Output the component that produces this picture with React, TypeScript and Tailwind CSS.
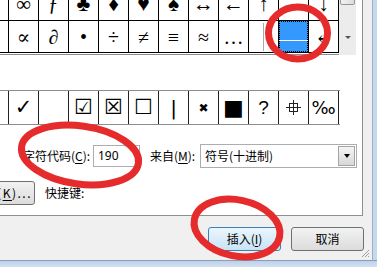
import type { ReactNode } from 'react';

const sym = "font-['Liberation_Serif','DejaVu_Serif',serif]";
const sans = "font-['DejaVu_Sans','Noto_Sans',sans-serif]";

const row1 = ['⁄', '∞', 'ƒ', '♣', '♦', '♥', '♠', '↔', '←', '↑', '→', '↓'];
const row2 = ['×', '∝', '∂', '•', '÷', '≠', '≡', '≈', '…', '⏐', '⎯', '↵'];

function Cell({ children }: { children?: ReactNode }) {
  return (
    <div className="flex h-[32px] w-[30px] shrink-0 items-center justify-center border-r border-b border-black">
      {children}
    </div>
  );
}

function SymbolGrid() {
  return (
    <div className="-mt-[11px] -ml-[21px] flex">
      <div className="flex flex-col">
        <div className={`flex text-[21px] leading-none ${sym}`}>
          {row1.map((s, i) => (
            <Cell key={i}>{s}</Cell>
          ))}
        </div>
        <div className={`flex text-[20px] leading-none ${sym}`}>
          {row2.map((s, i) => {
            if (i === 9) {
              return (
                <Cell key={i}>
                  <div className="h-[28px] w-px bg-[#a8a8a8]" />
                </Cell>
              );
            }
            if (i === 10) {
              return (
                <Cell key={i}>
                  <div className="flex h-full w-full flex-col justify-end bg-[#3399ff] pb-[11px] outline-1 -outline-offset-1 outline-dotted outline-black">
                    <div className="h-px bg-white" />
                  </div>
                </Cell>
              );
            }
            return <Cell key={i}>{s}</Cell>;
          })}
        </div>
        <div className="mt-px h-px bg-[#8c8c8c]" />
      </div>
      {/* scrollbar */}
      <div className="flex h-[66px] w-[17px] flex-col justify-between bg-[#ececec]">
        <div className="mx-px h-[16px] rounded-[2px] border border-[#979797] bg-gradient-to-r from-[#f3f3f3] to-[#dcdcdc]" />
        <div className="flex h-[20px] items-start justify-center pt-[1px]">
          <div className="h-0 w-0 border-x-[3px] border-t-[3px] border-x-transparent border-t-[#555]" />
        </div>
      </div>
    </div>
  );
}

function CrossHair() {
  return (
    <svg width="15" height="15" viewBox="0 0 15 15">
      <rect x="3.5" y="3.5" width="8" height="8" fill="none" stroke="#222" strokeWidth="1" />
      <line x1="7.5" y1="0" x2="7.5" y2="15" stroke="#222" strokeWidth="1" />
      <line x1="0" y1="7.5" x2="15" y2="7.5" stroke="#222" strokeWidth="1" />
    </svg>
  );
}

function RecentRow() {
  const items: ReactNode[] = [
    '',
    <span className="text-[21px] font-bold">✓</span>,
    '',
    <span className="text-[21px] font-bold">☑</span>,
    <span className="text-[21px] font-bold">☒</span>,
    <span className="text-[21px] font-bold">☐</span>,
    <span className="text-[20px]">|</span>,
    <span className="text-[12px]">✖</span>,
    <span className="text-[22px]">■</span>,
    <span className={`text-[19px] font-['Liberation_Sans',sans-serif]`}>?</span>,
    <CrossHair />,
    <span className="text-[18px]">‰</span>,
  ];
  return (
    <div className={`-ml-[21px] mt-[35px] flex w-[361px] border-y border-[#8c8c8c] leading-none ${sans}`}>
      {items.map((it, i) => (
        <div
          key={i}
          className="flex h-[33px] w-[30px] shrink-0 items-center justify-center border-r border-[#222]"
        >
          {it}
        </div>
      ))}
    </div>
  );
}

export default function App() {
  return (
    <div className="relative h-[267px] w-[377px] overflow-hidden bg-[#c6d8ec] font-['Noto_Sans_CJK_SC','Noto_Sans',sans-serif] text-[12px] text-black">
      <div className="flex h-[260px]">
        <div className="relative flex w-[372px] flex-col bg-[#f0f0f0]">
          {/* tab page */}
          <div className="h-[216px] w-[363px] shrink-0 overflow-hidden border-r border-b border-[#8e8f8f] bg-white">
            <SymbolGrid />
            <RecentRow />

            <div className="mt-[19px] flex h-[24px] items-center">
              <div className="w-[70px] shrink-0 pl-[23px] box-content whitespace-nowrap">
                字符代码(<span className="underline underline-offset-2">C</span>):
              </div>
              <div className="flex h-[22px] w-[47px] items-center border border-[#abadb3] pl-[4px] font-['Noto_Sans',sans-serif]">
                190
              </div>
              <div className="ml-[10px] w-[50px] shrink-0 whitespace-nowrap">
                来自(<span className="underline underline-offset-2">M</span>):
              </div>
              <div className="flex h-[24px] w-[157px] items-center justify-between border border-[#abadb3] pl-[4px]">
                <span>符号(十进制)</span>
                <div className="mr-px flex h-[20px] w-[17px] items-center justify-center border border-[#a4a4a4] bg-gradient-to-b from-[#f4f4f4] to-[#d8d8d8]">
                  <div className="h-0 w-0 border-x-[3.5px] border-t-[4px] border-x-transparent border-t-black" />
                </div>
              </div>
            </div>

            <div className="mt-[13px] flex h-[24px] items-center">
              <div className="-ml-[60px] flex h-[24px] w-[95px] shrink-0 items-center justify-end rounded-[3px] border border-[#707070] bg-gradient-to-b from-[#f2f2f2] to-[#dcdcdc] pr-[2px] whitespace-nowrap">
                快捷键
                <span className="tracking-[1.5px]">
                  (<span className="underline underline-offset-2">K</span>)...
                </span>
              </div>
              <div className="ml-[10px]">快捷键:</div>
            </div>
          </div>

          {/* buttons */}
          <div className="flex gap-[10px] pl-[208px] pt-[11px]">
            <div className="flex h-[24px] w-[73px] items-center justify-center rounded-[3px] border border-[#3c7fb1] bg-gradient-to-b from-[#eaf6fd] to-[#c9e3f5]">
              插入(<span className="underline underline-offset-2">I</span>)
            </div>
            <div className="flex h-[24px] w-[73px] items-center justify-center rounded-[3px] border border-[#707070] bg-gradient-to-b from-[#f2f2f2] to-[#dcdcdc]">
              取消
            </div>
          </div>

          {/* resize grip */}
          <svg className="absolute right-[2px] bottom-[2px]" width="10" height="10" viewBox="0 0 10 10">
            <line x1="9" y1="2" x2="2" y2="9" stroke="#a0a0a0" strokeWidth="1" />
            <line x1="9" y1="5" x2="5" y2="9" stroke="#a0a0a0" strokeWidth="1" />
            <line x1="9" y1="8" x2="8" y2="9" stroke="#a0a0a0" strokeWidth="1" />
          </svg>
        </div>
        <div className="flex-1 border-l border-[#9fb0c4]" />
      </div>
      <div className="h-[7px] border-t border-[#8d9db2] bg-gradient-to-b from-[#bcd1ea] to-[#d2e1f1]" />

      {/* red annotation marks */}
      <svg className="pointer-events-none absolute inset-0" width="377" height="267">
        <ellipse cx="298" cy="33" rx="29.5" ry="26" fill="none" stroke="#e52b2b" strokeWidth="7" />
        <ellipse cx="80" cy="155" rx="59" ry="29" transform="rotate(8 80 155)" fill="none" stroke="#e52b2b" strokeWidth="7" />
        <ellipse cx="237" cy="228" rx="43.5" ry="28" transform="rotate(12 237 228)" fill="none" stroke="#e52b2b" strokeWidth="7" />
      </svg>
    </div>
  );
}
